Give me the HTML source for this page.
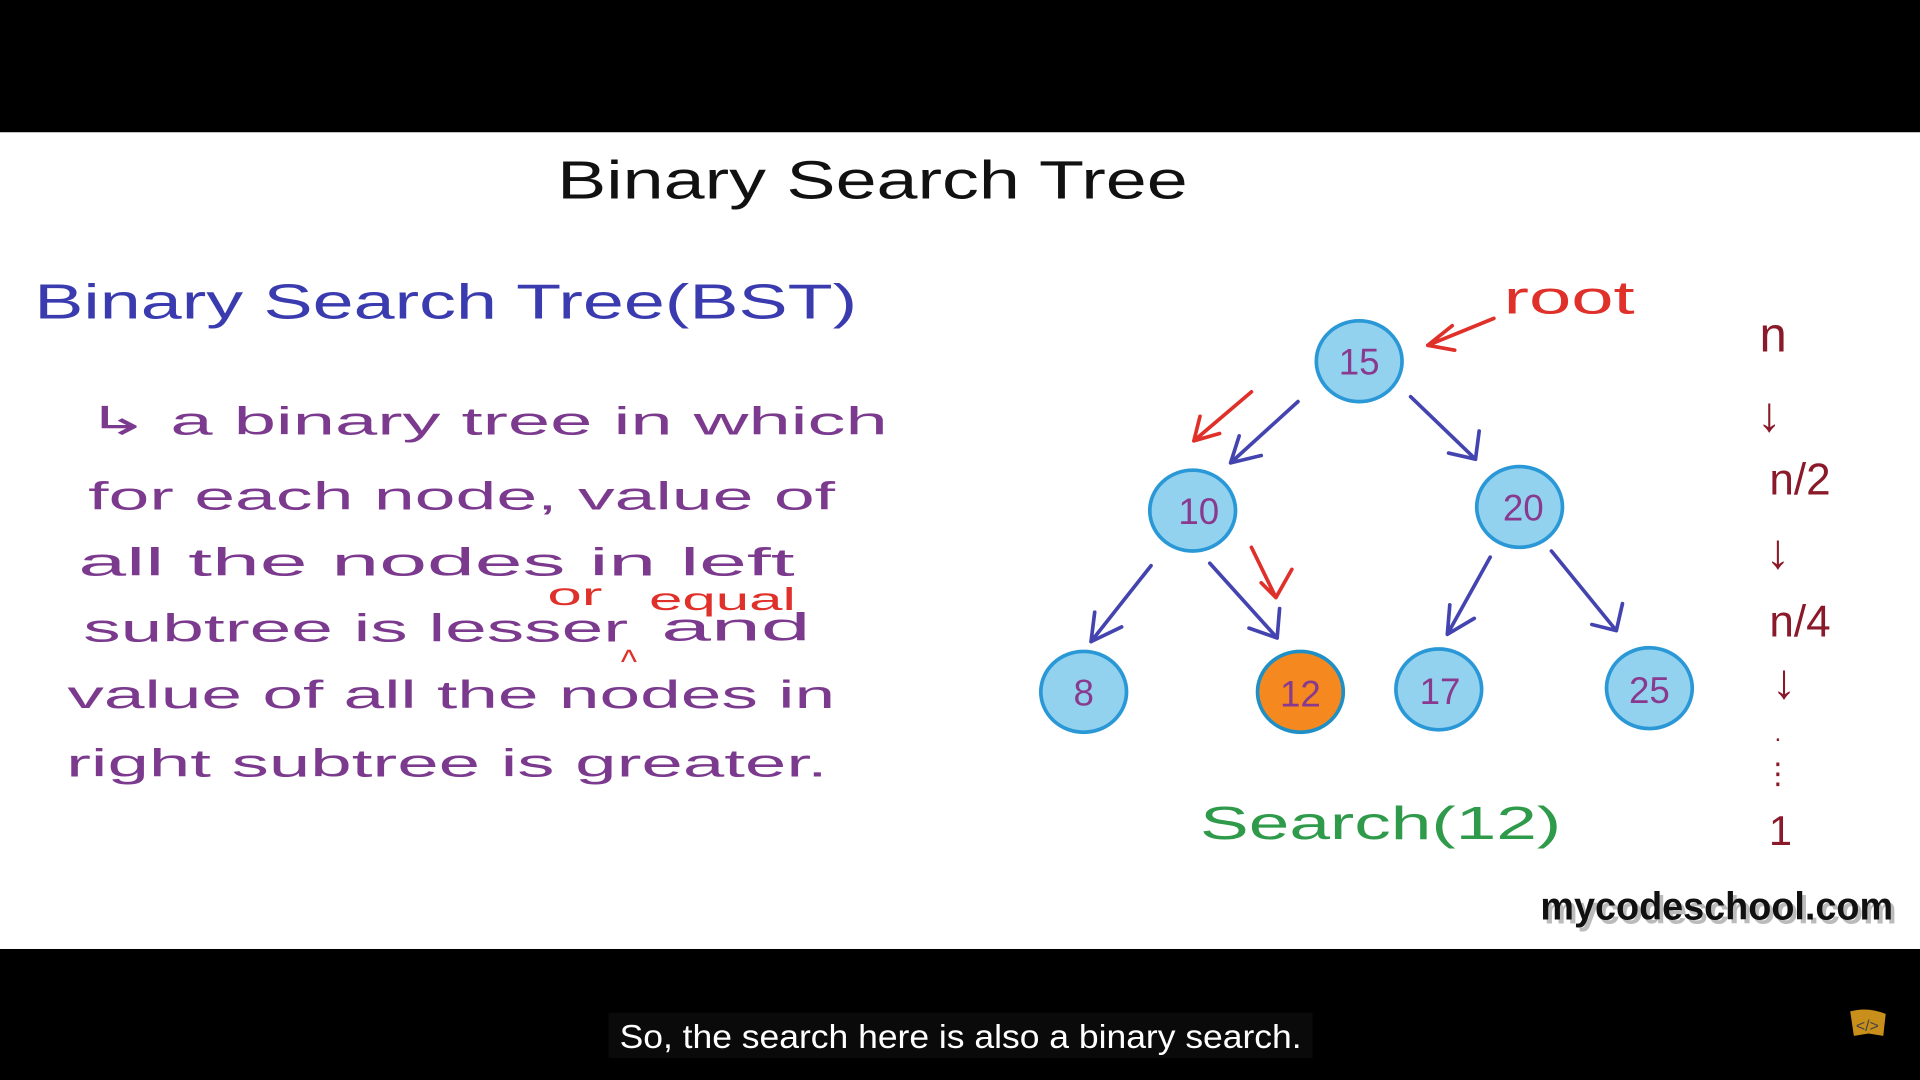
<!DOCTYPE html>
<html><head><meta charset="utf-8"><style>
html,body{margin:0;padding:0;background:#000;width:1920px;height:1080px;overflow:hidden}
svg{display:block}
text{font-family:"Liberation Sans","DejaVu Sans",sans-serif}
</style></head><body>
<svg width="1920" height="1080" viewBox="0 0 1568 882" preserveAspectRatio="none">
<rect x="0" y="0" width="1568" height="882" fill="#000"/>
<rect x="0" y="108" width="1568" height="667" fill="#fff"/>
<text x="455" y="162" font-size="44" fill="#111" textLength="515" lengthAdjust="spacingAndGlyphs">Binary Search Tree</text>
<text x="28" y="260" font-size="40" fill="#3b3bb0" textLength="672" lengthAdjust="spacingAndGlyphs">Binary Search Tree(BST)</text>
<g fill="#7b3a8e" font-size="32">
<text x="70" y="355" textLength="655" lengthAdjust="spacingAndGlyphs">↳ a binary tree in which</text>
<text x="72" y="416" textLength="610" lengthAdjust="spacingAndGlyphs">for each node, value of</text>
<text x="64" y="470" textLength="585" lengthAdjust="spacingAndGlyphs">all the nodes in left</text>
<text x="68" y="524" textLength="445" lengthAdjust="spacingAndGlyphs">subtree is lesser</text>
<text x="540" y="523" textLength="122" lengthAdjust="spacingAndGlyphs">and</text>
<text x="55" y="578" textLength="627" lengthAdjust="spacingAndGlyphs">value of all the nodes in</text>
<text x="54" y="634" textLength="622" lengthAdjust="spacingAndGlyphs">right subtree is greater.</text>
</g>
<g fill="#e0302a" font-size="26">
<text x="447" y="494" textLength="45" lengthAdjust="spacingAndGlyphs">or</text>
<text x="530" y="498" textLength="120" lengthAdjust="spacingAndGlyphs">equal</text>
<text x="507" y="550" font-size="28">^</text>
<text x="1228" y="256" font-size="38" textLength="107" lengthAdjust="spacingAndGlyphs">root</text>
</g>
<g fill="none" stroke-width="3" stroke-linecap="round" stroke-linejoin="round">
<g stroke="#e0302a">
<path d="M1220 260 L1166 282 M1166 282 L1186 266 M1166 282 L1188 286"/>
<path d="M1022 320 L975 360 M975 360 L980 340 M975 360 L996 354"/>
<path d="M1022 447 L1042 488 M1042 488 L1055 465 M1042 488 L1030 476"/>
</g>
<g stroke="#4444b0">
<path d="M1060 328 L1005 378 M1005 378 L1012 356 M1005 378 L1030 372"/>
<path d="M1152 324 L1205 375 M1205 375 L1183 370 M1205 375 L1208 352"/>
<path d="M940 462 L891 524 M891 524 L894 500 M891 524 L916 512"/>
<path d="M988 460 L1043 521 M1043 521 L1020 513 M1043 521 L1045 497"/>
<path d="M1217 455 L1182 518 M1182 518 L1184 494 M1182 518 L1204 505"/>
<path d="M1267 450 L1320 515 M1320 515 L1300 510 M1320 515 L1325 493"/>
</g>
</g>
<g stroke="#2a98d6" stroke-width="3" fill="#93d2ef">
<ellipse cx="1110" cy="295" rx="35" ry="33"/>
<ellipse cx="974" cy="417" rx="35" ry="33"/>
<ellipse cx="1241" cy="414" rx="35" ry="33"/>
<ellipse cx="885" cy="565" rx="35" ry="33"/>
<ellipse cx="1062" cy="565" rx="35" ry="33" fill="#f5891f" stroke="#1f8fc6"/>
<ellipse cx="1175" cy="563" rx="35" ry="33"/>
<ellipse cx="1347" cy="562" rx="35" ry="33"/>
</g>
<g fill="#8a3a8e" font-size="30" text-anchor="middle">
<text x="1110" y="306">15</text>
<text x="979" y="428">10</text>
<text x="1244" y="425">20</text>
<text x="885" y="576">8</text>
<text x="1062" y="577">12</text>
<text x="1176" y="575">17</text>
<text x="1347" y="574">25</text>
</g>
<g fill="#8a1a2a" font-size="34" text-anchor="middle">
<text x="1448" y="287" font-size="40">n</text>
<text x="1445" y="352" font-size="40">↓</text>
<text x="1470" y="404" font-size="36">n/2</text>
<text x="1452" y="464" font-size="40">↓</text>
<text x="1470" y="520" font-size="36">n/4</text>
<text x="1457" y="570" font-size="40">↓</text>
<text x="1452" y="605" font-size="20">.</text>
<text x="1452" y="640" font-size="24">⋮</text>
<text x="1454" y="690">1</text>
</g>
<text x="980" y="685" font-size="38" fill="#2e9a4a" textLength="295" lengthAdjust="spacingAndGlyphs">Search(12)</text>
<text x="1261" y="754" font-size="32" font-weight="bold" fill="#bbb" textLength="288" lengthAdjust="spacingAndGlyphs">mycodeschool.com</text>
<text x="1258" y="751" font-size="32" font-weight="bold" fill="#111" textLength="288" lengthAdjust="spacingAndGlyphs">mycodeschool.com</text>
<rect x="497" y="827" width="575" height="37" fill="#0a0a0a"/>
<text x="506" y="856" font-size="27" fill="#fff" textLength="557" lengthAdjust="spacingAndGlyphs">So, the search here is also a binary search.</text>
<path d="M1511 826 Q1525 822 1540 828 L1538 846 L1526 844 L1514 846 Z" fill="#c8901a"/>
<text x="1525" y="842" font-size="13" fill="#444" text-anchor="middle">&lt;/&gt;</text>
</svg>
</body></html>
